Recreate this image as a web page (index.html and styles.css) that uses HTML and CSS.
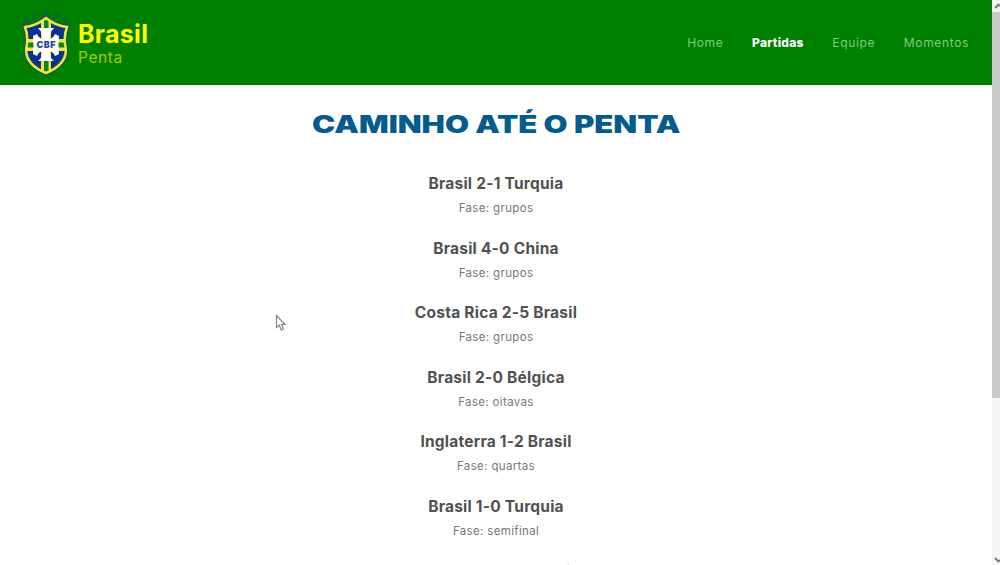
FILE: index.html
```html
<!DOCTYPE html>
<html lang="pt-BR">
<head>
<meta charset="utf-8">
<title>Brasil Penta</title>
<link rel="stylesheet" href="styles.css">
</head>
<body>
<div class="page">
  <header class="header">
    <div class="brand">
      <svg class="crest" width="50" height="68" viewBox="0 0 50 68">
        <g fill="#08682f">
          <path id="star" d="M25 0l1.500 3.200 3.500.2-2.700 2.200.9 3.400-3.200-1.900L21.900 9l.9-3.400-2.700-2.200 3.500-.2z"/>
          <use href="#star" x="-11" y="3"/><use href="#star" x="11" y="3"/>
          <use href="#star" x="-20" y="8"/><use href="#star" x="20" y="8"/>
        </g>
        <path d="M4 19Q15 18 25 10Q35 18 46 19Q43 27 44 36Q49 55 25 65Q1 55 6 36Q7 27 4 19Z" fill="#0b3292" stroke="#124a55" stroke-width="4.500"/>
        <path d="M20 14l5-4 5 4v48l-5 3-5-3zM5 31h40v12H5z" fill="#f0e545"/>
        <path d="M23 12h4.500v52H23zM5 34.500h40v5H5z" fill="#078522"/>
        <path d="M17 20h16q-5 5-4.500 11 4-1 5.500-5l4 2q-1 9 0 18l-4 2q-1.500-4-5.500-5-.5 6 4.500 10H17q5-4 4.500-10-4 1-5.500 5l-4-2q1-9 0-18l4-2q1.500 4 5.500 5 .5-6-4.500-11z" fill="#fff"/>
        <path d="M4 19Q15 18 25 10Q35 18 46 19Q43 27 44 36Q49 55 25 65Q1 55 6 36Q7 27 4 19Z" fill="none" stroke="#f0e545" stroke-width="2.500"/>
        <text class="crest-text" x="25" y="39.500" textLength="19">CBF</text>
      </svg>
      <div class="brand-text">
        <div class="brand-name">Brasil</div>
        <div class="brand-sub">Penta</div>
      </div>
    </div>
    <nav class="nav">
      <a>Home</a><a class="active">Partidas</a><a>Equipe</a><a>Momentos</a>
    </nav>
  </header>
  <main class="content">
    <h1 class="title"><span>CAMINHO ATÉ O PENTA</span></h1>
    <section class="match"><h2>Brasil 2-1 Turquia</h2><p>Fase: grupos</p></section>
    <section class="match"><h2>Brasil 4-0 China</h2><p>Fase: grupos</p></section>
    <section class="match"><h2>Costa Rica 2-5 Brasil</h2><p>Fase: grupos</p></section>
    <section class="match"><h2>Brasil 2-0 Bélgica</h2><p>Fase: oitavas</p></section>
    <section class="match"><h2>Inglaterra 1-2 Brasil</h2><p>Fase: quartas</p></section>
    <section class="match"><h2>Brasil 1-0 Turquia</h2><p>Fase: semifinal</p></section>
    <section class="match"><h2>Alemanha 0-2 Brasil</h2></section>
  </main>
</div>
<div class="scrollbar">
  <svg class="arrow" viewBox="0 0 8 12"><path d="M3 8l3.500-3.500L8 6"/></svg>
  <div class="thumb"></div>
  <svg class="arrow" viewBox="0 0 8 12"><path d="M3 5l3.500 3.500L8 7"/></svg>
</div>
<svg class="cursor" width="12" height="19" viewBox="0 0 12 19"><path d="M1.500 1.500v12l2.700-2.500 2 5 2.300-1-2-4.500h3.500z"/></svg>
</body>
</html>
```

FILE: styles.css
```css
* { box-sizing: border-box; margin: 0; padding: 0; }
body {
  display: flex;
  width: 1000px;
  height: 565px;
  overflow: hidden;
  background: #fff;
  font-family: Inter, "Open Sans", sans-serif;
}
.page { width: 992px; height: 565px; overflow: hidden; }
.header {
  display: flex;
  justify-content: space-between;
  align-items: center;
  height: 85px;
  padding: 0 23px 0 21px;
  background: #008000;
}
.brand { display: flex; align-items: center; gap: 7px; }
.crest { display: block; margin-bottom: 2px; }
.crest-text {
  font: 900 9px Inter, sans-serif;
  fill: #234a91;
  text-anchor: middle;
}
.brand-text { padding-top: 5px; }
.brand-name {
  font-size: 25px;
  line-height: 26px;
  font-weight: 700;
  letter-spacing: 0.3px;
  color: #ff0;
}
.brand-sub {
  font-size: 15.500px;
  line-height: 22px;
  letter-spacing: 0.6px;
  color: #a0cd00;
}
.nav {
  display: flex;
  gap: 28.700px;
  font-size: 12px;
  line-height: 16px;
  letter-spacing: 0.65px;
  color: #86c686;
}
.nav .active { font-weight: 800; letter-spacing: 0.25px; color: #fff; }
.content { text-align: center; }
.title {
  height: 86px;
  padding-top: 24px;
  font-size: 24px;
  line-height: 32px;
  font-weight: 900;
  color: #065b8d;
  white-space: nowrap;
}
.title span { display: inline-block; transform: scaleX(1.295); }
.match { height: 64.600px; }
.match h2 {
  padding-top: 1px;
  font-size: 15.500px;
  line-height: 23px;
  font-weight: 700;
  letter-spacing: 0.23px;
  color: #515151;
}
.match p {
  padding-top: 3px;
  font-size: 11.500px;
  line-height: 20px;
  letter-spacing: 0.35px;
  color: #777;
}
.scrollbar {
  display: flex;
  flex-direction: column;
  justify-content: space-between;
  width: 8px;
  height: 565px;
  background: #f5f5f5;
}
.thumb { height: 386px; margin-bottom: auto; background: #cbcbcb; }
.arrow { width: 8px; height: 12px; fill: none; stroke: #777; stroke-width: 1.800; }
.cursor {
  position: absolute;
  left: 275px;
  top: 314px;
  fill: #fff;
  stroke: #858585;
  stroke-width: 1.200;
}
```
